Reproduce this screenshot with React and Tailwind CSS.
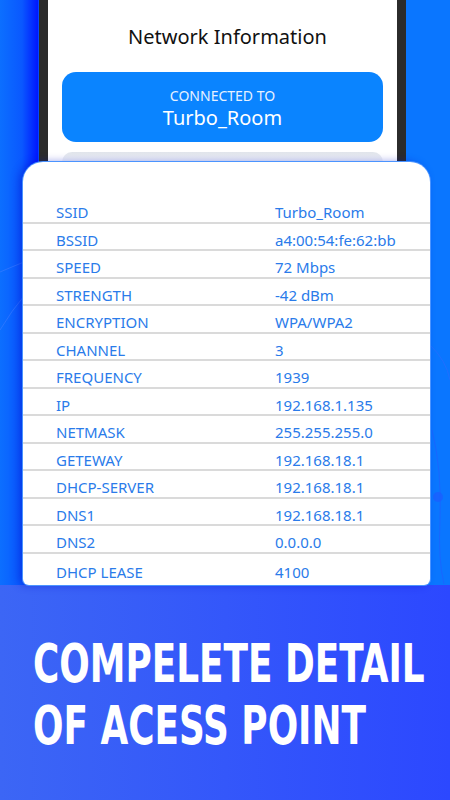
import React from 'react';

const ROWS = [
  { label: 'SSID', value: 'Turbo_Room' },
  { label: 'BSSID', value: 'a4:00:54:fe:62:bb' },
  { label: 'SPEED', value: '72 Mbps' },
  { label: 'STRENGTH', value: '-42 dBm' },
  { label: 'ENCRYPTION', value: 'WPA/WPA2' },
  { label: 'CHANNEL', value: '3' },
  { label: 'FREQUENCY', value: '1939' },
  { label: 'IP', value: '192.168.1.135' },
  { label: 'NETMASK', value: '255.255.255.0' },
  { label: 'GETEWAY', value: '192.168.18.1' },
  { label: 'DHCP-SERVER', value: '192.168.18.1' },
  { label: 'DNS1', value: '192.168.18.1' },
  { label: 'DNS2', value: '0.0.0.0' },
  { label: 'DHCP LEASE', value: '4100' }
];

export default function App() {
  return (
    <div className="relative w-[450px] h-[800px] overflow-hidden flex flex-col bg-[linear-gradient(90deg,#0c6fff_0px,#0a58ff_22px,#0016ff_38px,#0a76ff_39px)] font-['Noto_Sans',sans-serif]">
      {/* faint background strokes */}
      <svg className="absolute inset-0 pointer-events-none" width="450" height="800" viewBox="0 0 450 800">
        <path d="M0 272 Q14 266 24 262" stroke="#3d7dff" strokeWidth="1" fill="none" opacity="0.6" />
        <path d="M0 330 Q12 310 24 296" stroke="#3d7dff" strokeWidth="1" fill="none" opacity="0.6" />
        <path d="M430 345 Q446 360 450 380" stroke="#2a6cff" strokeWidth="1" fill="none" opacity="0.7" />
        <path d="M432 430 Q442 470 440 520 Q438 560 444 584" stroke="#1f5fff" strokeWidth="1" fill="none" opacity="0.7" />
        <circle cx="438" cy="497" r="5" fill="#1d5cff" opacity="0.7" />
      </svg>

      {/* phone frame */}
      <div className="relative ml-[39px] w-[367px] h-[162px] shrink-0 bg-white border-x-[9px] border-[#2b2b2b] flex flex-col items-center">
        <h1 className="mt-[24px] pl-[10px] text-[20px] leading-[26px] text-[#111]">Network Information</h1>
        <div className="mt-[22px] w-[321px] h-[70px] rounded-[14px] bg-[#0a84ff] flex flex-col items-center justify-center pt-[4px] text-white">
          <p className="text-[14px] leading-[16px] text-[#e6f1ff]">CONNECTED TO</p>
          <p className="mt-[2px] text-[20px] leading-[24px]">Turbo_Room</p>
        </div>
        <div className="mt-[10px] w-[321px] flex-1 rounded-t-[10px] bg-[linear-gradient(180deg,#e1e5eb,#f4f6f9)]" />
      </div>

      {/* details card */}
      <div className="relative ml-[23px] w-[407px] h-[423px] shrink-0 bg-white rounded-t-[20px] rounded-b-[6px] ring-1 ring-[#4b94ff] shadow-[-4px_0_8px_rgba(0,20,200,0.45)] pt-[34px] overflow-hidden">
        {ROWS.map((row, i) => (
          <div
            key={row.label}
            className={`h-[27.5px] flex items-end pb-[1.5px] text-[15px] leading-[15px] text-[#2a7bea] ${i < ROWS.length - 1 ? 'border-b-2 border-[#dadada]' : ''}`}
          >
            <span className="pl-[33px] w-[252px]">{row.label}</span>
            <span>{row.value}</span>
          </div>
        ))}
      </div>

      {/* bottom banner */}
      <div className="flex-1 bg-[linear-gradient(90deg,#3c66f5,#2c48ff)] pl-[33px] pt-[48px]">
        <h2 className="origin-left scale-x-[0.745] whitespace-nowrap text-white font-bold text-[53.5px] leading-[62px] font-['DejaVu_Sans_Condensed','DejaVu_Sans',sans-serif]">
          COMPELETE DETAIL
          <br />
          OF ACESS POINT
        </h2>
      </div>
    </div>
  );
}
